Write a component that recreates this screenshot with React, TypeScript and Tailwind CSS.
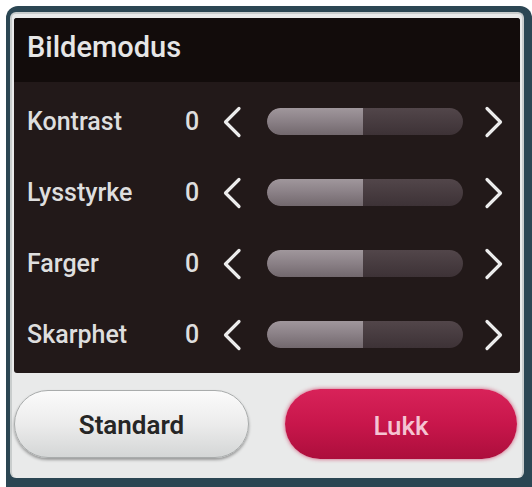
import React from 'react';

const rows = [
  { label: 'Kontrast', value: 0 },
  { label: 'Lysstyrke', value: 0 },
  { label: 'Farger', value: 0 },
  { label: 'Skarphet', value: 0 },
];

const Chevron: React.FC<{ dir: 'left' | 'right' }> = ({ dir }) => (
  <svg width="20" height="32" viewBox="0 0 20 32" className="shrink-0">
    <path
      d={dir === 'left' ? 'M17 2.5 L3.5 16 L17 29.5' : 'M3 2.5 L16.5 16 L3 29.5'}
      fill="none"
      stroke="#ececec"
      strokeWidth="3.2"
      strokeLinecap="round"
      strokeLinejoin="round"
    />
  </svg>
);

const SettingRow: React.FC<{ label: string; value: number }> = ({ label, value }) => (
  <div className="flex h-[71px] items-center pl-[13px]">
    <span className="w-[158px] text-[25px] font-medium text-[#dedede]">{label}</span>
    <span className="w-[12px] text-center text-[25px] font-medium text-[#dedede]">{value}</span>
    <div className="ml-[25px]">
      <Chevron dir="left" />
    </div>
    <div className="ml-[25px] flex h-[27px] w-[196px] overflow-hidden rounded-full bg-gradient-to-b from-[#52464a] to-[#3d3236]">
      <div className="h-full w-[96px] rounded-l-full bg-gradient-to-b from-[#a0979c] via-[#8a8086] to-[#72686d]" />
    </div>
    <div className="ml-[21px]">
      <Chevron dir="right" />
    </div>
  </div>
);

export default function App() {
  return (
    <div
      className="flex h-[487px] w-[532px] bg-white pl-[6px] pt-[6px]"
      style={{ fontFamily: 'Roboto, "Liberation Sans", sans-serif' }}
    >
      <div className="flex flex-1 rounded-t-[12px] bg-[#2b4653] pb-[9px] pl-[4px] pr-[8px] pt-[6px]">
        <div className="flex flex-1 flex-col rounded-[6px] border-t-2 border-l-2 border-r-2 border-[#c9cdcd] bg-[#e9eaea] px-[2px] pt-[4px]">
          <div className="flex h-[355px] flex-col rounded-[3px] bg-[#221919]">
            <div className="flex h-[64px] items-center rounded-t-[3px] bg-[#120c0b] pb-[4px] pl-[13px]">
              <span className="text-[29px] font-medium text-[#e6e6e6]">Bildemodus</span>
            </div>
            <div className="flex flex-col pt-[4px]">
              {rows.map((r) => (
                <SettingRow key={r.label} label={r.label} value={r.value} />
              ))}
            </div>
          </div>
          <div className="mt-[16px] flex items-center justify-between pr-[3px]">
            <button className="flex h-[68px] w-[235px] items-center justify-center rounded-full border border-[#a9acac] bg-gradient-to-b from-[#fbfbfb] via-[#ececec] to-[#d4d6d6] pt-[2px] text-[26px] font-semibold text-[#262626] shadow-[0_2px_3px_rgba(0,0,0,0.35)]">
              Standard
            </button>
            <button className="flex h-[70px] w-[232px] items-center justify-center rounded-full bg-gradient-to-b from-[#d82259] via-[#c8164b] to-[#ac0e3c] pt-[4px] text-[26px] font-medium text-[#f5c4d3] shadow-[0_0_4px_rgba(200,20,70,0.7)]">
              Lukk
            </button>
          </div>
        </div>
      </div>
    </div>
  );
}
